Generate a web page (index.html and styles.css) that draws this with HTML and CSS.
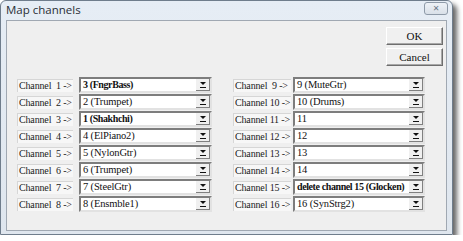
FILE: index.html
```html
<!DOCTYPE html>
<html lang="en">
<head>
  <meta charset="UTF-8">
  <title>Map channels</title>
  <link rel="stylesheet" href="styles.css">
</head>
<body>
  <div class="window">
    <div class="titlebar">
      <span class="title">Map channels</span>
      <span class="close">&#x2715;</span>
    </div>
    <div class="client">
      <div class="actions">
        <button class="btn">OK</button>
        <button class="btn">Cancel</button>
      </div>
      <div class="columns">
        <div class="column left">
          <div class="row"><span class="label">Channel&nbsp; 1 -&gt;</span><div class="combo bold"><span class="value">3 (FngrBass)</span><span class="drop"></span></div></div>
          <div class="row"><span class="label">Channel&nbsp; 2 -&gt;</span><div class="combo"><span class="value">2 (Trumpet)</span><span class="drop"></span></div></div>
          <div class="row"><span class="label">Channel&nbsp; 3 -&gt;</span><div class="combo bold"><span class="value">1 (Shakhchi)</span><span class="drop"></span></div></div>
          <div class="row"><span class="label">Channel&nbsp; 4 -&gt;</span><div class="combo"><span class="value">4 (ElPiano2)</span><span class="drop"></span></div></div>
          <div class="row"><span class="label">Channel&nbsp; 5 -&gt;</span><div class="combo"><span class="value">5 (NylonGtr)</span><span class="drop"></span></div></div>
          <div class="row"><span class="label">Channel&nbsp; 6 -&gt;</span><div class="combo"><span class="value">6 (Trumpet)</span><span class="drop"></span></div></div>
          <div class="row"><span class="label">Channel&nbsp; 7 -&gt;</span><div class="combo"><span class="value">7 (SteelGtr)</span><span class="drop"></span></div></div>
          <div class="row"><span class="label">Channel&nbsp; 8 -&gt;</span><div class="combo"><span class="value">8 (Ensmble1)</span><span class="drop"></span></div></div>
        </div>
        <div class="column right">
          <div class="row"><span class="label">Channel&nbsp; 9 -&gt;</span><div class="combo"><span class="value">9 (MuteGtr)</span><span class="drop"></span></div></div>
          <div class="row"><span class="label">Channel 10 -&gt;</span><div class="combo"><span class="value">10 (Drums)</span><span class="drop"></span></div></div>
          <div class="row"><span class="label">Channel 11 -&gt;</span><div class="combo"><span class="value">11</span><span class="drop"></span></div></div>
          <div class="row"><span class="label">Channel 12 -&gt;</span><div class="combo"><span class="value">12</span><span class="drop"></span></div></div>
          <div class="row"><span class="label">Channel 13 -&gt;</span><div class="combo"><span class="value">13</span><span class="drop"></span></div></div>
          <div class="row"><span class="label">Channel 14 -&gt;</span><div class="combo"><span class="value">14</span><span class="drop"></span></div></div>
          <div class="row"><span class="label">Channel 15 -&gt;</span><div class="combo bold"><span class="value">delete channel 15 (Glocken)</span><span class="drop"></span></div></div>
          <div class="row"><span class="label">Channel 16 -&gt;</span><div class="combo"><span class="value">16 (SynStrg2)</span><span class="drop"></span></div></div>
        </div>
      </div>
    </div>
  </div>
</body>
</html>
```

FILE: styles.css
```css
* {
  box-sizing: border-box;
}
body {
  margin: 0;
  background: #fff;
  font-family: "Liberation Serif", serif;
}
.window {
  width: 453px;
  height: 235px;
  border: 1px solid #6f7d8c;
  border-radius: 6px 6px 0 0;
  background: linear-gradient(to bottom, #e6edf5, #dfe6ee);
  box-shadow: 4px 4px 5px rgba(0, 0, 0, .6);
  display: flex;
  flex-direction: column;
}
.titlebar {
  height: 19px;
  display: flex;
  align-items: center;
  justify-content: space-between;
  padding: 0 3px 0 5px;
}
.title {
  font-family: "Open Sans", sans-serif;
  font-size: 11.5px;
  color: #2a2f36;
  margin-top: -2px;
}
.close {
  width: 24px;
  height: 13px;
  border: 1px solid #8e9aa8;
  border-radius: 3px;
  background: linear-gradient(#eef2f7, #d9e0e8);
  font-family: "DejaVu Sans", sans-serif;
  font-size: 8px;
  line-height: 11px;
  text-align: center;
  color: #6b7888;
  margin-top: -4px;
  margin-right: 1px;
}
.client {
  flex: 1;
  margin: 0 5px 3px 5px;
  background: #efefef;
  border: 1px solid #a0a8b2;
  display: flex;
  flex-direction: column;
}
.actions {
  display: flex;
  flex-direction: column;
  align-items: flex-end;
  gap: 3px;
  padding: 6px 3px 0 0;
}
.btn {
  width: 57px;
  height: 18px;
  font-family: "Liberation Serif", serif;
  font-size: 11px;
  color: #111;
  background: #f0f0f0;
  border: 1px solid;
  border-color: #fff #6e6e6e #6e6e6e #fff;
  box-shadow: inset -1px -1px 0 #a8a8a8;
  padding: 0;
}
.columns {
  display: flex;
  gap: 21px;
  padding: 11px 0 0 10px;
}
.column {
  display: flex;
  flex-direction: column;
  gap: 1px;
}
.left .combo { width: 133px; }
.right .combo { width: 132px; }
.left .label { width: 56px; margin-right: 6px; }
.right .label { width: 58px; margin-right: 2px; }
.row {
  display: flex;
  align-items: center;
  height: 16px;
}
.label {
  height: 13px;
  line-height: 12px;
  font-size: 10px;
  letter-spacing: -0.15px;
  color: #222;
  background: #f7f7f7;
  border-top: 1px solid #d6d6d6;
  border-left: 1px solid #d6d6d6;
  padding-left: 1px;
  white-space: nowrap;
  overflow: hidden;
}
.combo {
  height: 16px;
  background: #fff;
  border: 2px solid;
  border-color: #7d7d7d #e2e2e2 #e2e2e2 #7d7d7d;
  display: flex;
  align-items: stretch;
  font-size: 10.5px;
  letter-spacing: -0.15px;
  color: #111;
}
.combo.bold {
  font-weight: bold;
  font-size: 10px;
  letter-spacing: -0.4px;
}
.value {
  flex: 1;
  padding-left: 2px;
  line-height: 12px;
  white-space: nowrap;
  overflow: hidden;
}
.drop {
  width: 15px;
  background: #f0f0f0;
  border-left: 1px solid #fff;
  box-shadow: inset -1px -1px 0 #808080;
  position: relative;
}
.drop::before {
  content: "";
  position: absolute;
  left: 4px;
  top: 3px;
  border-left: 3px solid transparent;
  border-right: 3px solid transparent;
  border-top: 3px solid #111;
}
.drop::after {
  content: "";
  position: absolute;
  left: 4px;
  top: 8px;
  width: 6px;
  height: 1px;
  background: #111;
}
```
